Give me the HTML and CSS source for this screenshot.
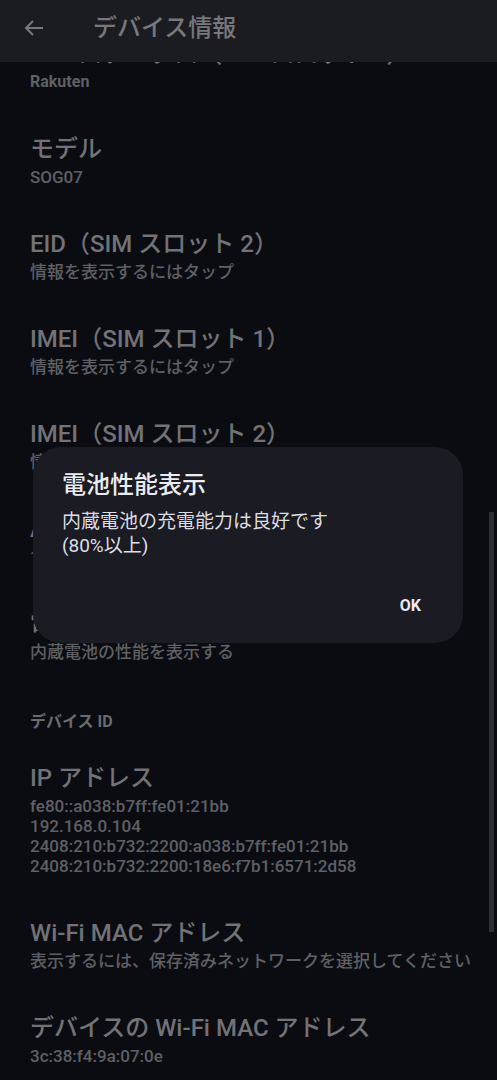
FILE: index.html
```html
<!DOCTYPE html>
<html lang="ja">
<head>
<meta charset="utf-8">
<link rel="stylesheet" href="styles.css">
</head>
<body>
<div class="screen">
  <header class="appbar">
    <svg class="back" width="22" height="20" viewBox="0 0 22 20"><path d="M20 10H3M10 3L3 10l7 7" fill="none" stroke="#77777c" stroke-width="2"/></svg>
    <h1 class="appbar-title">デバイス情報</h1>
  </header>
  <main class="viewport">
    <div class="list">
      <div class="item"><div class="title">SIM ステータス（SIM スロット 2）</div><div class="sub">Rakuten</div></div>
      <div class="item"><div class="title">モデル</div><div class="sub">SOG07</div></div>
      <div class="item"><div class="title">EID（SIM スロット 2）</div><div class="sub">情報を表示するにはタップ</div></div>
      <div class="item"><div class="title">IMEI（SIM スロット 1）</div><div class="sub">情報を表示するにはタップ</div></div>
      <div class="item"><div class="title">IMEI（SIM スロット 2）</div><div class="sub">情報を表示するにはタップ</div></div>
      <div class="item"><div class="title">Android バージョン</div><div class="sub">14</div></div>
      <div class="item"><div class="title">電池性能表示</div><div class="sub">内蔵電池の性能を表示する</div></div>
      <div class="category">デバイス ID</div>
      <div class="item"><div class="title">IP アドレス</div><div class="sub">fe80::a038:b7ff:fe01:21bb<br>192.168.0.104<br>2408:210:b732:2200:a038:b7ff:fe01:21bb<br>2408:210:b732:2200:18e6:f7b1:6571:2d58</div></div>
      <div class="item"><div class="title">Wi-Fi MAC アドレス</div><div class="sub">表示するには、保存済みネットワークを選択してください</div></div>
      <div class="item"><div class="title">デバイスの Wi-Fi MAC アドレス</div><div class="sub">3c:38:f4:9a:07:0e</div></div>
    </div>
    <div class="scrollbar"></div>
  </main>
  <div class="dialog">
    <div class="dialog-title">電池性能表示</div>
    <div class="dialog-body">内蔵電池の充電能力は良好です<br>(80%以上)</div>
    <div class="dialog-actions"><span class="btn">OK</span></div>
  </div>
</div>
</body>
</html>
```
FILE: styles.css
```css
html, body {
  margin: 0;
  padding: 0;
  background: #0b0c11;
}
body {
  font-family: Roboto, "Noto Sans CJK JP", sans-serif;
}
.screen {
  position: relative;
  width: 497px;
  height: 1080px;
  overflow: hidden;
  background: #0b0c11;
}
.appbar {
  position: relative;
  z-index: 2;
  height: 62px;
  background: #1b1c21;
  display: flex;
  align-items: center;
  box-sizing: border-box;
  padding-left: 23px;
  padding-bottom: 6px;
}
.back {
  display: block;
}
.appbar-title {
  margin: 0 0 0 48px;
  font-size: 24px;
  font-weight: 500;
  color: #77777c;
  line-height: 32px;
}
.viewport {
  position: relative;
  height: 1018px;
}
.list {
  margin-top: -45.5px;
}
.item {
  padding: 20.5px 30px;
}
.title {
  font-size: 24px;
  line-height: 34px;
  font-weight: 500;
  color: #727277;
  white-space: nowrap;
}
.sub {
  margin-top: 1px;
  font-size: 17px;
  line-height: 20px;
  font-weight: 500;
  color: #5f6065;
  white-space: nowrap;
  margin-bottom: -1px;
}
.item:first-child .sub {
  font-weight: 700;
  font-size: 16px;
}
.category {
  padding: 30px 30px 9px;
  font-size: 16px;
  line-height: 20px;
  font-weight: 700;
  color: #6a6b70;
}
.scrollbar {
  position: absolute;
  left: 489px;
  top: 495px;
  width: 5px;
  height: 420px;
  background: #2e2f34;
}
.dialog {
  position: absolute;
  z-index: 3;
  left: 33px;
  top: 447px;
  width: 430px;
  height: 196px;
  box-sizing: border-box;
  padding: 22px 29px 0;
  border-radius: 28px;
  background: #1a1b23;
  display: flex;
  flex-direction: column;
}
.dialog-title {
  font-size: 24px;
  line-height: 32px;
  font-weight: 500;
  color: #ececf0;
}
.dialog-body {
  margin-top: 9px;
  font-size: 19px;
  line-height: 24px;
  color: #dedee2;
}
.dialog-actions {
  display: flex;
  justify-content: flex-end;
  margin-top: 28px;
  padding-right: 13px;
}
.btn {
  font-size: 16px;
  line-height: 40px;
  font-weight: 700;
  color: #eaeaf0;
}
```
